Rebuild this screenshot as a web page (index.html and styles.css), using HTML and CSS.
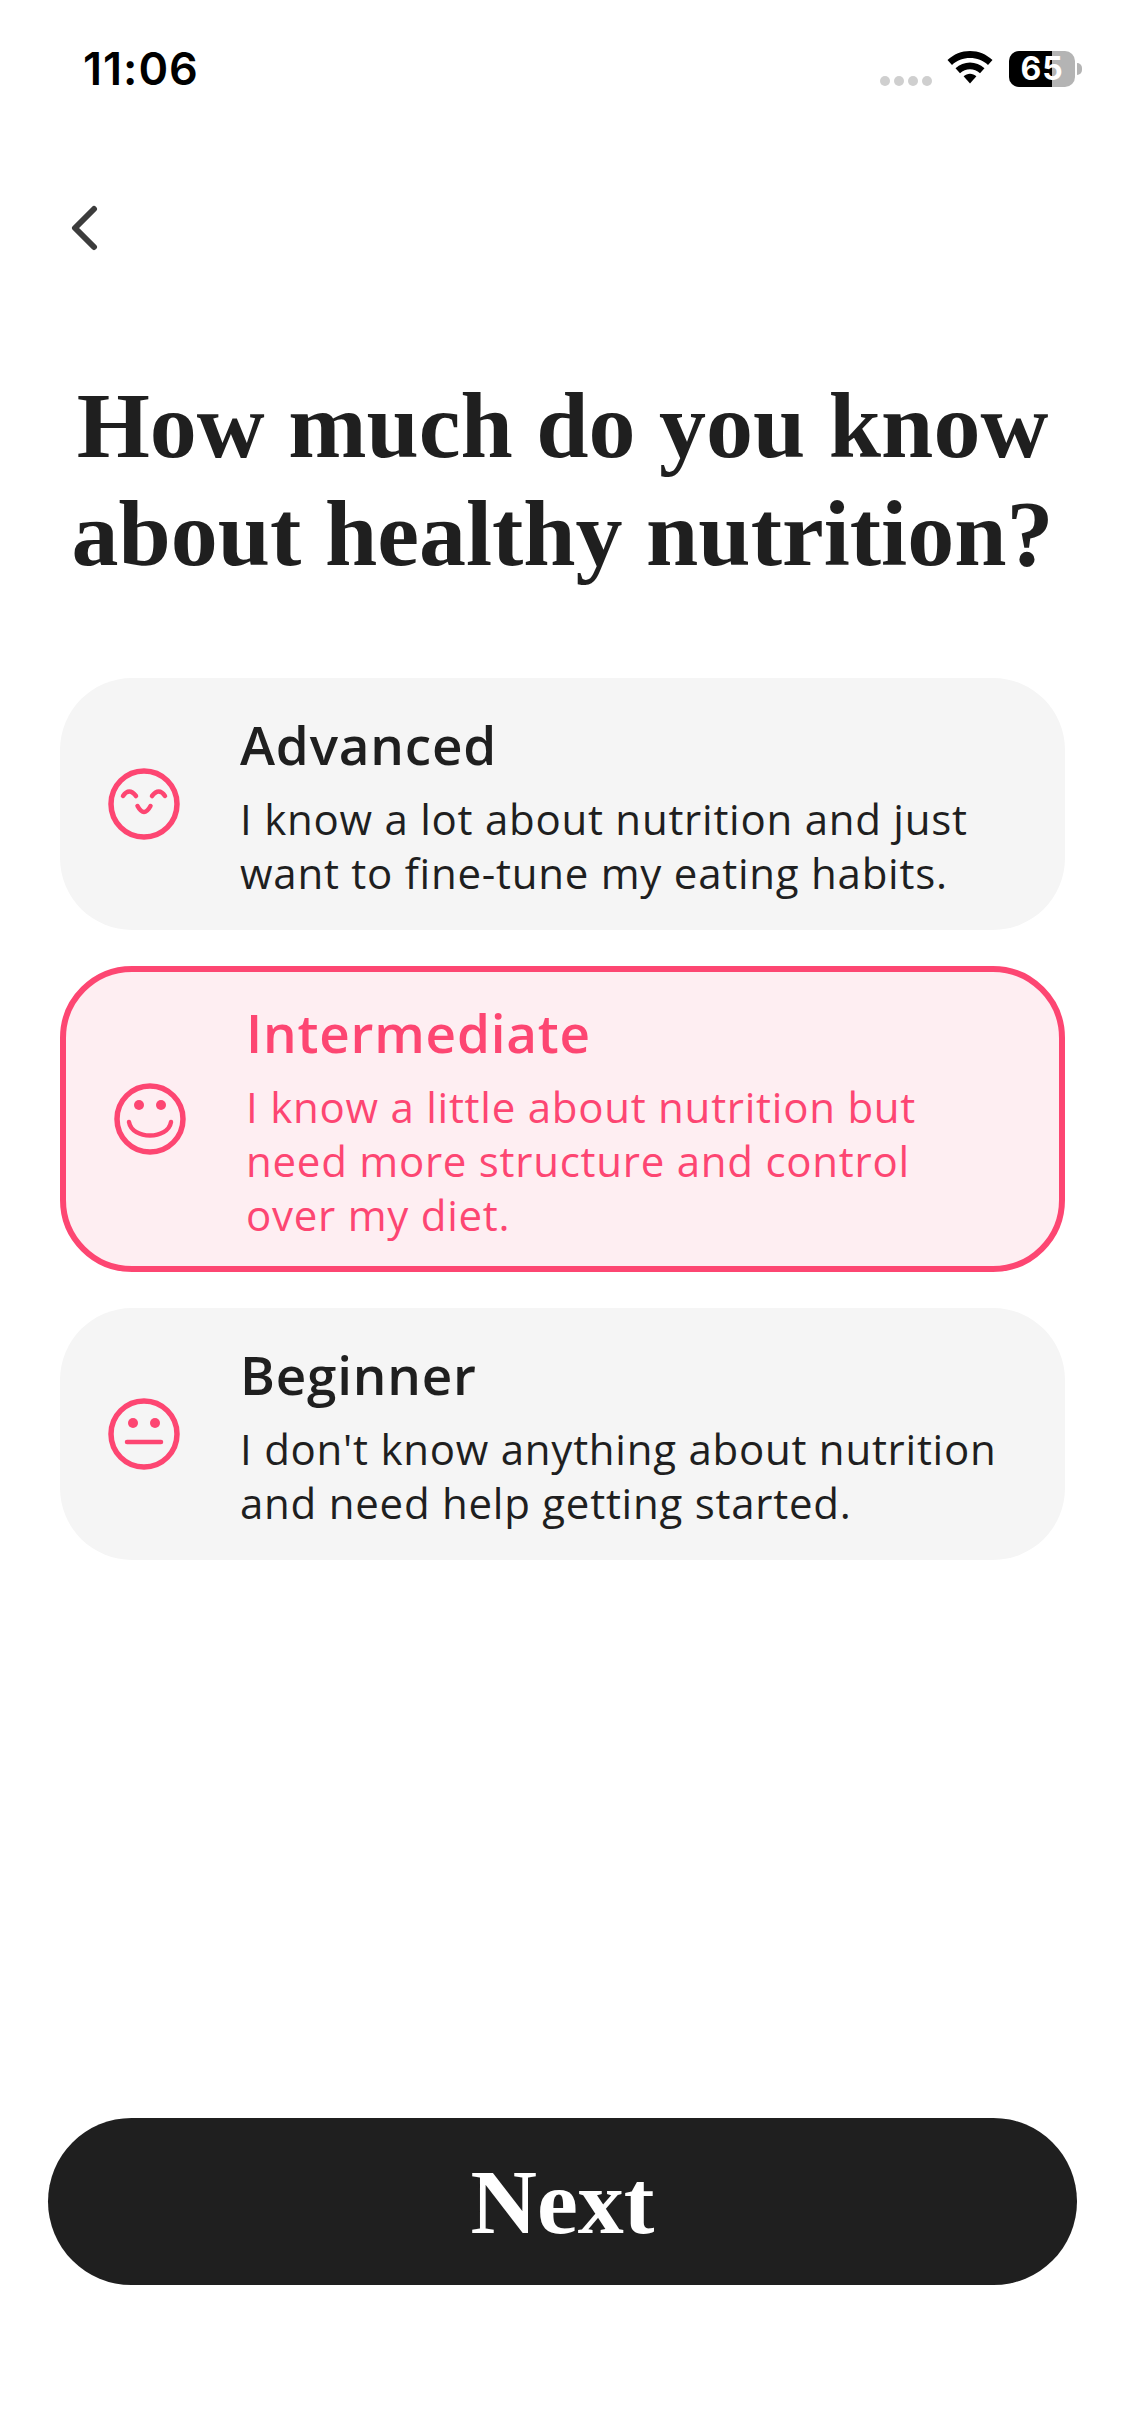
FILE: index.html
```html
<!DOCTYPE html>
<html lang="en">
<head>
<meta charset="utf-8">
<title>Nutrition knowledge</title>
<link rel="stylesheet" href="styles.css">
</head>
<body>
<main class="screen">
  <header class="status">
    <span class="time">11:06</span>
    <div class="status-icons">
      <span class="dots"><i></i><i></i><i></i><i></i></span>
      <svg class="wifi" width="46" height="34" viewBox="0 0 46 34"><path fill="#000" d="M23 0C14.500 0 6.800 3.300 0.500 8.900L5 13.900C9.900 9.500 16.100 7 23 7S36.100 9.500 41 13.900L45.500 8.900C39.200 3.300 31.500 0 23 0Z"/><path fill="#000" d="M23 11.500C17.600 11.500 12.700 13.600 8.500 17.200L13 22.200C15.900 19.700 19.300 18.300 23 18.300S30.100 19.700 33 22.200L37.500 17.200C33.300 13.600 28.400 11.500 23 11.500Z"/><path fill="#000" d="M23 22.800C20.700 22.800 18.400 23.700 16.600 25.300L23 32.500L29.400 25.300C27.600 23.700 25.300 22.800 23 22.800Z"/></svg>
      <div class="battery"><div class="battery-body"><div class="battery-fill"></div><span class="battery-text">65</span></div><span class="battery-cap"></span></div>
    </div>
  </header>

  <nav class="nav">
    <svg width="30" height="46" viewBox="0 0 30 46"><path d="M24 4 L5 23 L24 42" fill="none" stroke="#3c3c3c" stroke-width="6" stroke-linecap="round" stroke-linejoin="round"/></svg>
  </nav>

  <h1 class="title">How much do you know<br>about healthy nutrition?</h1>

  <section class="options">
    <article class="option">
      <svg class="face" width="72" height="72" viewBox="0 0 72 72"><circle cx="36" cy="36" r="33" fill="none" stroke="#fd4672" stroke-width="5.500"/><path d="M15 28Q21 19 28 28M44 28Q51 19 57 28" fill="none" stroke="#fd4672" stroke-width="4.500" stroke-linecap="round"/><path d="M29.500 38Q36 50 42.500 38" fill="none" stroke="#fd4672" stroke-width="4.500" stroke-linecap="round"/></svg>
      <div class="option-text">
        <h2>Advanced</h2>
        <p>I know a lot about nutrition and just<br>want to fine-tune my eating habits.</p>
      </div>
    </article>
    <article class="option selected">
      <svg class="face" width="72" height="72" viewBox="0 0 72 72"><circle cx="36" cy="36" r="33" fill="none" stroke="#fd4672" stroke-width="5.500"/><circle cx="25" cy="22" r="5" fill="#fd4672"/><circle cx="47" cy="22" r="5" fill="#fd4672"/><path d="M15 39C18 57 54 57 57 39" fill="none" stroke="#fd4672" stroke-width="4.500" stroke-linecap="round"/></svg>
      <div class="option-text">
        <h2>Intermediate</h2>
        <p>I know a little about nutrition but<br>need more structure and control<br>over my diet.</p>
      </div>
    </article>
    <article class="option">
      <svg class="face" width="72" height="72" viewBox="0 0 72 72"><circle cx="36" cy="36" r="33" fill="none" stroke="#fd4672" stroke-width="5.500"/><circle cx="25" cy="25" r="5" fill="#fd4672"/><circle cx="47" cy="25" r="5" fill="#fd4672"/><path d="M19 44H53" fill="none" stroke="#fd4672" stroke-width="4.500" stroke-linecap="round"/></svg>
      <div class="option-text">
        <h2>Beginner</h2>
        <p>I don't know anything about nutrition<br>and need help getting started.</p>
      </div>
    </article>
  </section>

  <footer class="footer">
    <button class="next">Next</button>
  </footer>
</main>
</body>
</html>
```

FILE: styles.css
```css
* { box-sizing: border-box; }
html, body { margin: 0; padding: 0; background: #fff; }
.screen {
  width: 1125px;
  height: 2436px;
  display: flex;
  flex-direction: column;
}
.status {
  height: 100px;
  padding: 41px 43px 0 83px;
  display: flex;
  justify-content: space-between;
  align-items: flex-start;
}
.time {
  font: 600 45px/56px Inter, sans-serif;
  color: #000;
  letter-spacing: 1px;
}
.status-icons { display: flex; align-items: flex-start; }
.dots { display: flex; gap: 4px; margin-top: 35px; margin-right: 15px; }
.dots i { width: 10px; height: 10px; border-radius: 50%; background: #cfcfcf; }
.wifi { margin-top: 10px; margin-right: 16px; }
.battery { display: flex; align-items: center; margin-top: 10px; }
.battery-body {
  position: relative;
  width: 66px;
  height: 36px;
  border-radius: 10px;
  background: #b4b4b4;
}
.battery-fill { width: 43px; height: 100%; background: #000; border-radius: 10px 0 0 10px; }
.battery-text {
  position: absolute;
  inset: 0;
  text-align: center;
  color: #fff;
  font: 700 32px/36px Inter, sans-serif;
  letter-spacing: 1px;
}
.battery-cap { width: 5px; height: 12px; margin-left: 2px; background: #b4b4b4; border-radius: 0 6px 6px 0; }
.nav { margin: 105px 0 0 70px; height: 46px; }
.title {
  margin: 120px 0 91px;
  text-align: center;
  font: 700 94px/108px "Liberation Serif", serif;
  color: #1f1f1f;
}
.options {
  margin: 0 60px;
  display: flex;
  flex-direction: column;
  gap: 36px;
}
.option {
  display: flex;
  align-items: center;
  background: #f5f5f5;
  border-radius: 72px;
  padding: 30px 40px 30px 48px;
  min-height: 252px;
}
.option.selected {
  background: #feeef2;
  border: 6px solid #fd4672;
  padding: 24.5px 40px 24.5px 48px;
}
.face { flex: none; }
.option-text { margin-left: 60px; padding-top: 3px; }
.option h2 {
  margin: 0;
  font: 600 53px/66px "Open Sans", sans-serif;
  letter-spacing: 0.8px;
  color: #1f1f1f;
}
.option p {
  margin: 14px 0 0;
  font: 400 42px/54px "Open Sans", sans-serif;
  letter-spacing: 0.75px;
  color: #1f1f1f;
}
.option.selected h2, .option.selected p { color: #fd4672; }
.footer { margin-top: auto; padding: 0 48px 151px; }
.next {
  display: block;
  width: 100%;
  height: 167px;
  border: 0;
  border-radius: 84px;
  background: #1f1f1f;
  color: #fff;
  font: 700 92px/1 "Liberation Serif", serif;
}
```
